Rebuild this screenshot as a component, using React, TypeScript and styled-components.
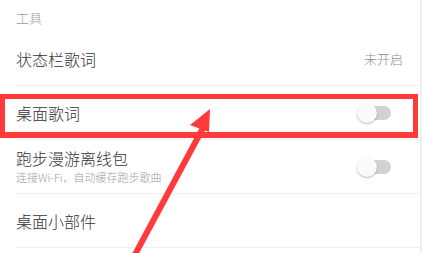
import React from "react";
import styled, { createGlobalStyle } from "styled-components";

const Global = createGlobalStyle`
  html, body { margin: 0; padding: 0; background: #fff; }
  body { font-family: "Noto Sans CJK SC", "Noto Sans", sans-serif; }
  * { box-sizing: border-box; }
`;

const Page = styled.div`
  position: relative;
  display: flex;
  width: 422px;
  height: 253px;
  overflow: hidden;
  background: #fff;
`;

const List = styled.div`
  flex: 1;
  display: flex;
  flex-direction: column;
  padding-left: 16px;
`;

const Scrollbar = styled.div`
  width: 2px;
  background: #efefef;
`;

const SectionHeader = styled.div`
  height: 32px;
  padding-top: 9px;
  font-size: 13px;
  line-height: 18px;
  font-weight: 300;
  color: #9a9a9a;
`;

const Row = styled.div`
  position: relative;
  flex: none;
  height: 54px;
  display: flex;
  align-items: center;
  justify-content: space-between;
  padding-right: 17px;
  border-bottom: 1px solid #eeeeee;
`;

const TextBlock = styled.div`
  display: flex;
  flex-direction: column;
`;

const Title = styled.div`
  font-size: 16px;
  line-height: 20px;
  font-weight: 300;
  color: #333333;
`;

const Subtitle = styled.div`
  margin-top: 1px;
  font-size: 11px;
  line-height: 16px;
  font-weight: 300;
  color: #a0a0a0;
`;

const Value = styled.div`
  font-size: 13px;
  line-height: 18px;
  font-weight: 300;
  color: #8f8f8f;
`;

const Toggle = styled.div`
  position: relative;
  width: 34px;
  height: 22px;
  margin-right: 12px;
`;

const Track = styled.div`
  position: absolute;
  left: 5px;
  top: 4px;
  width: 29px;
  height: 14px;
  border-radius: 7px;
  background: #d2d2d2;
`;

const Knob = styled.div`
  position: absolute;
  left: 0;
  top: 1px;
  width: 20px;
  height: 20px;
  border-radius: 50%;
  background: #fafafa;
  box-shadow: 0 1px 2px rgba(0, 0, 0, 0.28);
`;

const Highlight = styled.div`
  position: absolute;
  left: -16px;
  right: 2px;
  top: 8px;
  height: 44px;
  border: 5px solid #fe3a3a;
  border-bottom-width: 6px;
  pointer-events: none;
`;

const ArrowLayer = styled.svg`
  position: absolute;
  left: 0;
  top: 0;
  width: 422px;
  height: 253px;
  pointer-events: none;
`;

const Switch = () => (
  <Toggle>
    <Track />
    <Knob />
  </Toggle>
);

export default function App() {
  return (
    <>
      <Global />
      <Page>
        <List>
          <SectionHeader>工具</SectionHeader>
          <Row>
            <Title>状态栏歌词</Title>
            <Value>未开启</Value>
          </Row>
          <Row>
            <Title>桌面歌词</Title>
            <Switch />
            <Highlight />
          </Row>
          <Row>
            <TextBlock>
              <Title>跑步漫游离线包</Title>
              <Subtitle>连接Wi-Fi，自动缓存跑步歌曲</Subtitle>
            </TextBlock>
            <Switch />
          </Row>
          <Row>
            <Title>桌面小部件</Title>
          </Row>
        </List>
        <Scrollbar />
        <ArrowLayer viewBox="0 0 422 253">
          <line x1="131" y1="262" x2="203" y2="128" stroke="#fe3a3a" strokeWidth="6" />
          <polygon points="210,109 190,125 209,132" fill="#fe3a3a" />
        </ArrowLayer>
      </Page>
    </>
  );
}
